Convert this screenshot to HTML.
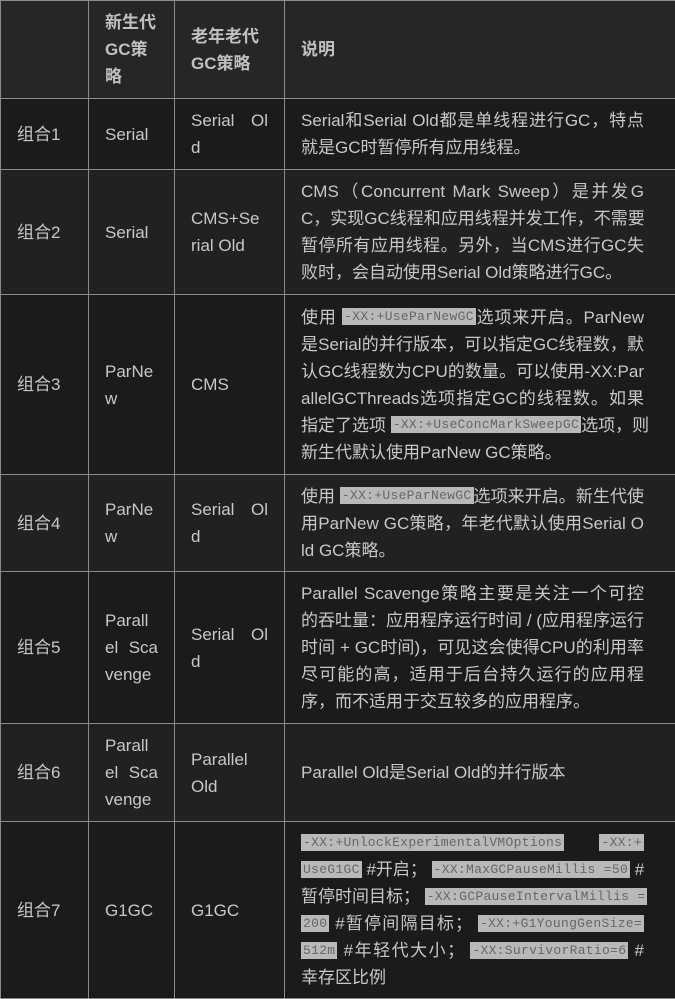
<!DOCTYPE html>
<html><head><meta charset="utf-8"><style>
html,body{margin:0;padding:0;background:#1b1b1b;}
body{width:675px;height:998px;overflow:hidden;font-family:"Liberation Sans","Noto Sans CJK SC",sans-serif;color:#c8c8c8;font-size:17px;}
table{border-collapse:collapse;table-layout:fixed;width:676px;position:absolute;left:0;top:0;}
td,th{border:1px solid #8a8a8a;padding:0 0 0 16px;vertical-align:middle;text-align:left;line-height:27px;overflow:hidden;}
th{font-weight:bold;background:#262626;color:#c0c0c0;}
tr.o td{background:#1b1b1b;}
tr.e td{background:#212121;}
.l{text-align:justify;text-align-last:justify;white-space:nowrap;padding-right:16px;height:27px;}
td.d{padding-right:16px;}
code{font-family:"Liberation Mono","DejaVu Sans Mono",monospace;font-size:13px;line-height:17px;display:inline-block;vertical-align:middle;background:#b9b9b9;color:#666;padding:0 2px;letter-spacing:0.3px;margin-top:-3px;}
</style></head><body>
<table>
<colgroup><col style="width:88px"><col style="width:86px"><col style="width:110px"><col style="width:392px"></colgroup>
<tr style="height:98px"><th></th><th>新生代<br>GC策<br>略</th><th>老年老代<br>GC策略</th><th>说明</th></tr>
<tr class="o" style="height:71px"><td>组合1</td><td>Serial</td><td><div class="l">Serial Ol</div>d</td><td class="d"><div class="l">Serial和Serial Old都是单线程进行GC，特点</div>就是GC时暂停所有应用线程。</td></tr>
<tr class="e" style="height:125px"><td>组合2</td><td>Serial</td><td>CMS+Se<br>rial Old</td><td class="d"><div class="l">CMS（Concurrent Mark Sweep）是并发G</div><div class="l">C，实现GC线程和应用线程并发工作，不需要</div><div class="l">暂停所有应用线程。另外，当CMS进行GC失</div>败时，会自动使用Serial Old策略进行GC。</td></tr>
<tr class="o" style="height:180px"><td>组合3</td><td>ParNe<br>w</td><td>CMS</td><td class="d"><div class="l">使用 <code>-XX:+UseParNewGC</code>选项来开启。ParNew</div><div class="l">是Serial的并行版本，可以指定GC线程数，默</div><div class="l">认GC线程数为CPU的数量。可以使用-XX:Par</div><div class="l">allelGCThreads选项指定GC的线程数。如果</div><div class="l">指定了选项 <code>-XX:+UseConcMarkSweepGC</code>选项，则</div>新生代默认使用ParNew GC策略。</td></tr>
<tr class="e" style="height:97px"><td>组合4</td><td>ParNe<br>w</td><td><div class="l">Serial Ol</div>d</td><td class="d"><div class="l">使用 <code>-XX:+UseParNewGC</code>选项来开启。新生代使</div><div class="l">用ParNew GC策略，年老代默认使用Serial O</div>ld GC策略。</td></tr>
<tr class="o" style="height:152px"><td>组合5</td><td>Parall<br><div class="l">el Sca</div>venge</td><td><div class="l">Serial Ol</div>d</td><td class="d"><div class="l">Parallel Scavenge策略主要是关注一个可控</div><div class="l">的吞吐量：应用程序运行时间 / (应用程序运行</div><div class="l">时间 + GC时间)，可见这会使得CPU的利用率</div><div class="l">尽可能的高，适用于后台持久运行的应用程</div>序，而不适用于交互较多的应用程序。</td></tr>
<tr class="e" style="height:98px"><td>组合6</td><td>Parall<br><div class="l">el Sca</div>venge</td><td>Parallel<br>Old</td><td class="d">Parallel Old是Serial Old的并行版本</td></tr>
<tr class="o" style="height:177px"><td>组合7</td><td>G1GC</td><td>G1GC</td><td class="d"><div class="l"><code>-XX:+UnlockExperimentalVMOptions</code> <code>-XX:+</code></div><div class="l"><code>UseG1GC</code> #开启； <code>-XX:MaxGCPauseMillis =50</code> #</div><div class="l">暂停时间目标； <code>-XX:GCPauseIntervalMillis =</code></div><div class="l"><code>200</code> #暂停间隔目标； <code>-XX:+G1YoungGenSize=</code></div><div class="l"><code>512m</code> #年轻代大小； <code>-XX:SurvivorRatio=6</code> #</div>幸存区比例</td></tr>
</table>
</body></html>
